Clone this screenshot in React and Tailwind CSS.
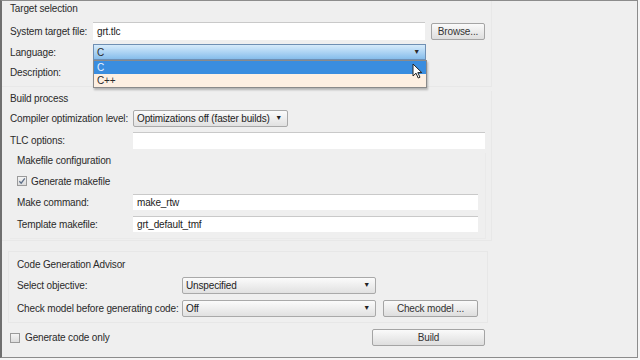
import React from "react";

const font = { fontFamily: '"Liberation Sans", Arial, sans-serif', letterSpacing: "-0.15px" };

function TextBox({ value, className }) {
  return (
    <div
      className={`flex shrink-0 items-center bg-white border-t border-[#c9c9c9] px-[4px] text-[10px] whitespace-nowrap text-[#222] ${className}`}
    >
      {value}
    </div>
  );
}

function Select({ value, className }) {
  return (
    <div
      className={`flex shrink-0 items-center justify-between rounded-[2px] border border-[#a9a9a9] bg-gradient-to-b from-[#fbfbfb] to-[#e1e1e1] pl-[3px] pr-[5px] text-[10px] whitespace-nowrap text-[#222] ${className}`}
    >
      <span>{value}</span>
      <span className="text-[7px] text-[#222]">▼</span>
    </div>
  );
}

function Button({ label, className }) {
  return (
    <div
      className={`flex shrink-0 items-center justify-center rounded-[2px] border border-[#a4a4a4] bg-gradient-to-b from-[#fafafa] to-[#dedede] text-[10px] whitespace-nowrap text-[#333] ${className}`}
    >
      {label}
    </div>
  );
}

function CheckBox({ checked }) {
  return (
    <div className="flex h-[10px] w-[10px] shrink-0 items-center justify-center border border-[#9a9a9a] bg-gradient-to-b from-[#f4f4f4] to-[#dcdcdc]">
      {checked && (
        <svg width="8" height="8" viewBox="0 0 8 8">
          <path d="M1.3 4.2 L3.2 6.2 L6.8 1.4" fill="none" stroke="#5d6f88" strokeWidth="1.3" />
        </svg>
      )}
    </div>
  );
}

export default function App() {
  return (
    <div className="h-[360px] w-[640px] overflow-hidden bg-[#f5f5f5] text-[#2a2a2a]" style={font}>
      <div className="relative flex h-[358px] w-[638px] flex-col border-t border-r border-b border-l-2 border-[#8c8c8c] border-l-[#6f6f6f] bg-[#efefef] text-[10px] whitespace-nowrap">
        {/* Target selection */}
        <div className="flex h-[86px] w-[490px] flex-col border-r border-b border-[#e8e8e8] pl-[8px]">
          <div className="mt-[1px] flex h-[13px] items-center">Target selection</div>
          <div className="mt-[7px] flex h-[18px] items-center">
            <div className="w-[83px] shrink-0">System target file:</div>
            <TextBox value="grt.tlc" className="h-[18px] w-[332px]" />
            <Button label="Browse..." className="ml-[6px] h-[17px] w-[54px]" />
          </div>
          <div className="relative mt-[4px] flex h-[16px] items-center">
            <div className="w-[83px] shrink-0">Language:</div>
            <div className="flex h-[16px] w-[333px] shrink-0 items-center justify-between border border-[#6f8fb3] bg-gradient-to-b from-[#d6ebfb] to-[#86bdeb] pl-[3px] pr-[5px]">
              <span>C</span>
              <span className="text-[7px]">▼</span>
            </div>
            <div className="absolute top-[16px] left-[83px] z-10 flex w-[334px] flex-col border border-[#8a8a8a] bg-white shadow-[1px_2px_2px_rgba(0,0,0,0.25)]">
              <div className="flex h-[13px] items-center bg-[#3a8ddf] pl-[3px] text-[#eaf3ff]">C</div>
              <div className="flex h-[13px] items-center bg-[#fdefe2] pl-[3px]">C++</div>
            </div>
            <svg className="absolute top-[19px] left-[402px] z-20" width="11" height="16" viewBox="0 0 11 16">
              <path d="M1 1 L1 13 L4 10.2 L6.2 15 L8 14.2 L5.8 9.6 L9.8 9.6 Z" fill="#fff" stroke="#222" strokeWidth="1" />
            </svg>
          </div>
          <div className="mt-[5px] flex h-[14px] items-center">Description:</div>
        </div>

        {/* Build process */}
        <div className="mt-[4px] flex h-[150px] w-[490px] flex-col border-r border-b border-[#e8e8e8] pl-[8px]">
          <div className="flex h-[14px] items-center">Build process</div>
          <div className="mt-[5px] flex h-[17px] items-center">
            <div className="w-[123px] shrink-0">Compiler optimization level:</div>
            <Select value="Optimizations off (faster builds)" className="h-[17px] w-[155px]" />
          </div>
          <div className="mt-[5px] flex h-[17px] items-center">
            <div className="w-[123px] shrink-0">TLC options:</div>
            <TextBox value="" className="h-[17px] w-[352px]" />
          </div>
          <div className="mt-[4px] flex w-[476px] flex-col border-r border-b border-[#eaeaea] pl-[7px] pb-[6px]">
            <div className="flex h-[14px] items-center">Makefile configuration</div>
            <div className="mt-[7px] flex h-[14px] items-center">
              <CheckBox checked />
              <span className="ml-[4px]">Generate makefile</span>
            </div>
            <div className="mt-[6px] flex h-[16px] items-center">
              <div className="w-[116px] shrink-0">Make command:</div>
              <TextBox value="make_rtw" className="h-[16px] w-[345px]" />
            </div>
            <div className="mt-[6px] flex h-[16px] items-center">
              <div className="w-[116px] shrink-0">Template makefile:</div>
              <TextBox value="grt_default_tmf" className="h-[16px] w-[345px]" />
            </div>
          </div>
        </div>

        {/* Code Generation Advisor */}
        <div className="mt-[10px] ml-[6px] flex w-[480px] flex-col border border-[#e7e7e7] pt-[5px] pb-[5px] pl-[8px]">
          <div className="flex h-[14px] items-center">Code Generation Advisor</div>
          <div className="mt-[6px] flex h-[17px] items-center">
            <div className="w-[165px] shrink-0">Select objective:</div>
            <Select value="Unspecified" className="h-[17px] w-[194px]" />
          </div>
          <div className="mt-[6px] flex h-[17px] items-center">
            <div className="w-[165px] shrink-0">Check model before generating code:</div>
            <Select value="Off" className="h-[17px] w-[194px]" />
            <Button label="Check model ..." className="ml-[7px] h-[17px] w-[95px]" />
          </div>
        </div>

        {/* Bottom */}
        <div className="mt-[6px] flex h-[17px] w-[483px] items-center pl-[8px]">
          <CheckBox />
          <span className="ml-[5px]">Generate code only</span>
          <Button label="Build" className="ml-auto h-[17px] w-[113px]" />
        </div>
      </div>
    </div>
  );
}
